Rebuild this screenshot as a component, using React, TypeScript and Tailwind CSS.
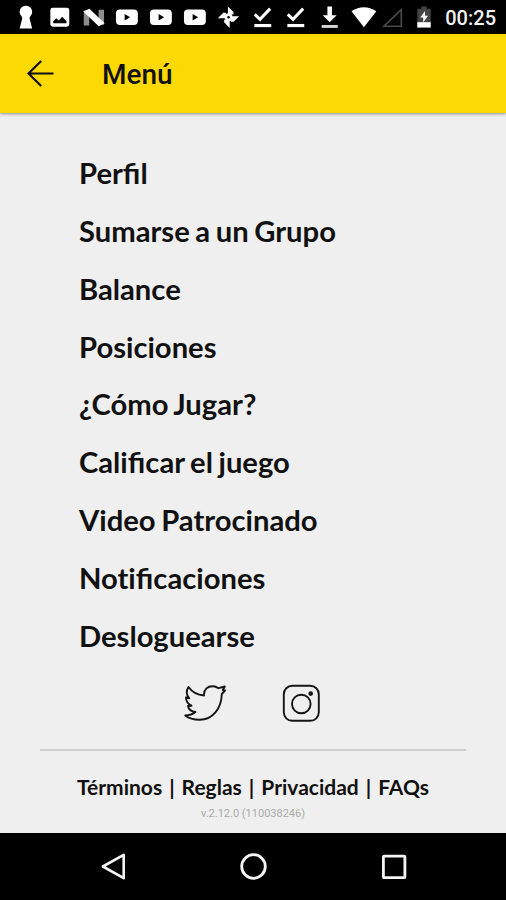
import type { ReactNode } from "react";

const MENU_ITEMS = [
  "Perfil",
  "Sumarse a un Grupo",
  "Balance",
  "Posiciones",
  "¿Cómo Jugar?",
  "Calificar el juego",
  "Video Patrocinado",
  "Notificaciones",
  "Desloguearse",
];

const LEGAL_LINKS = ["Términos", "Reglas", "Privacidad", "FAQs"];

function StatusIcon({ children }: { children: ReactNode }) {
  return (
    <svg viewBox="0 0 34 34" className="h-[34px] w-[33.8px] shrink-0" fill="#fff">
      {children}
    </svg>
  );
}

function YoutubeIcon() {
  return (
    <StatusIcon>
      <rect x="6" y="9.5" width="22" height="15.5" rx="4" />
      <path d="M14.7 14v6.4l5.6-3.2z" fill="#000" />
    </StatusIcon>
  );
}

function CheckIcon() {
  return (
    <StatusIcon>
      <path d="M8.8 14.3l5.3 5L24.3 8.6" fill="none" stroke="#fff" strokeWidth="3" />
      <path d="M8.4 24h17v3.2h-17z" />
    </StatusIcon>
  );
}

function StatusBar() {
  return (
    <div className="flex h-[34px] shrink-0 items-center bg-black pl-[9px]">
      <StatusIcon>
        <path d="M17 5.6a6.2 6.2 0 0 1 4.6 10.4L20.6 18l2.7 10.5H10.7L13.4 18l-1-2A6.2 6.2 0 0 1 17 5.6z" />
      </StatusIcon>
      <StatusIcon>
        <rect x="7.4" y="7.8" width="19" height="19" rx="2.4" />
        <path d="M10.3 23.2v-2l3-3 2.6 2.4 3.4-3.8 4.3 4.4v2z" fill="#000" />
      </StatusIcon>
      <StatusIcon>
        <path d="M6.8 10.5v15h5.5v-15zM21.7 9.8v15h5.5v-15z" fill="#8d8d8d" />
        <path d="M6.3 11.5l6.2-2.8L27.8 23.3l-6 3z" />
      </StatusIcon>
      <YoutubeIcon />
      <YoutubeIcon />
      <YoutubeIcon />
      {/* pinwheel */}
      <StatusIcon>
        <path d="M16 6.4l5.6 5.6v2.6H16zM27.4 16.2l-5.6 5.6h-2.6v-5.6zM17.8 28l-5.6-5.6v-2.6h5.6zM5.8 18.2l5.6-5.6H14v5.6z" />
        <circle cx="16.7" cy="17.2" r="3.9" />
        <circle cx="16.7" cy="17.2" r="1.3" fill="#000" />
      </StatusIcon>
      <CheckIcon />
      <CheckIcon />
      <StatusIcon>
        <path d="M14.5 6.5h4.6v8.7h4.7l-7 7.2-7-7.2h4.7z" />
        <path d="M8.7 25h16.2v3H8.7z" fill="#d5d5d5" />
      </StatusIcon>
      <StatusIcon>
        <path d="M4.5 11.2Q17 3.2 29.5 11.2L17 27.2z" />
      </StatusIcon>
      <svg viewBox="0 0 24 34" className="h-[34px] w-6 shrink-0" fill="none">
        <path d="M3 26.2L20.3 9.6v16.6z" stroke="#4a4a4a" strokeWidth="1.6" />
      </svg>
      <svg viewBox="0 0 16 34" className="ml-[11px] h-[34px] w-4 shrink-0">
        <path d="M1.3 8.7h4V6.5h5.4v2.2h4v18.8H1.3z" fill="#444" />
        <path d="M1.3 22.2h13.4v5.3H1.3z" fill="#fff" />
        <path d="M9 11l-4.8 6.5h3v5l4.8-6.8H9z" fill="#fff" />
      </svg>
      <span className="ml-auto pr-[10px] pt-[2px] font-['Roboto',sans-serif] text-[20px] font-medium leading-none text-[#f2f2f2]">
        00:25
      </span>
    </div>
  );
}

function Header() {
  return (
    <header className="relative flex h-[79px] shrink-0 items-center bg-[#fdd903] pl-[26px] shadow-[0_1px_3px_rgba(0,0,0,0.4)]">
      <button aria-label="Volver">
        <svg viewBox="0 0 28 28" className="size-7" fill="none" stroke="#111" strokeWidth="2.2">
          <path d="M27.5 13.5H2M15.2 1L2.5 13.5 15.2 26" />
        </svg>
      </button>
      <h1 className="ml-12 pt-[3px] font-['Roboto',sans-serif] text-[28px] font-medium leading-none text-[#111]">
        Menú
      </h1>
    </header>
  );
}

// Lato joins "ti" as well as "fi"; only the latter is wanted
function MenuLabel({ text }: { text: string }) {
  const [head, tail] = text.split("ti");
  if (tail === undefined) return <span>{text}</span>;
  return (
    <span>
      <span className="[font-variant-ligatures:none]">{head}ti</span>
      {tail}
    </span>
  );
}

function SocialLinks() {
  return (
    <div className="flex items-center pl-[184px]">
      <svg viewBox="0 0 42 38" className="h-[38px] w-[42px]" fill="none" stroke="#151515" strokeWidth="1.9" strokeLinejoin="round">
        <path d="M4.5 3C8 8 13.5 11 20 11.5C19.5 5 24 2 29 2.2C31.5 2.3 33 3.2 34.5 4.2L40.8 2.5L38.8 6L41 6.5L37.8 10C37.5 24 29 36 15.5 35.8C10 35.7 5 34.5 1.2 31.5C5.5 31.3 8.5 30.5 11.5 28C7 27.5 4.5 25 4 22L7.5 21.7C4 20 2 17 2 13.5L5.3 14.3C2.2 11 2 7 4.5 3Z" />
      </svg>
      <svg viewBox="0 0 38 38" className="ml-[56px] size-[38px]" fill="none" stroke="#151515" strokeWidth="1.9">
        <rect x="1.8" y="1.8" width="35" height="35" rx="8.5" />
        <circle cx="19.3" cy="20" r="9.3" />
        <circle cx="28.7" cy="9.6" r="1.4" fill="#151515" />
      </svg>
    </div>
  );
}

function NavBar() {
  return (
    <nav className="flex h-[67px] shrink-0 items-center justify-between bg-black pl-[100px] pr-[98px]">
      <svg viewBox="0 0 28 28" className="size-7" fill="none" stroke="#f4f4f4" strokeWidth="2.6" strokeLinejoin="round">
        <path d="M2.9 13.5L23.7 1.8v23.4z" />
      </svg>
      <svg viewBox="0 0 28 28" className="size-7" fill="none" stroke="#f4f4f4" strokeWidth="2.8">
        <circle cx="13.5" cy="13.5" r="11.8" />
      </svg>
      <svg viewBox="0 0 28 28" className="size-7" fill="none" stroke="#f4f4f4" strokeWidth="2.8">
        <rect x="3.4" y="3.2" width="21.5" height="21.5" rx="0.8" />
      </svg>
    </nav>
  );
}

export default function App() {
  return (
    <div className="flex h-[900px] w-[506px] flex-col overflow-hidden bg-[#efefef] font-['Lato',sans-serif] text-[#111]">
      <StatusBar />
      <Header />

      <main className="flex flex-1 flex-col pt-[31px]">
        <ul className="flex flex-col pl-[79px]">
          {MENU_ITEMS.map((item) => (
            <li key={item} className="flex h-[57.8px] items-center text-[29.2px] font-bold leading-none [word-spacing:-1.5px]">
              <MenuLabel text={item} />
            </li>
          ))}
        </ul>

        <div className="mt-5">
          <SocialLinks />
        </div>

        <hr className="mx-10 mt-[27px] border-t-2 border-[#cfcfcf]" />

        <div className="mt-6 flex justify-center gap-[7px] text-[21px] font-bold leading-6">
          {LEGAL_LINKS.map((link, i) => (
            <span key={link} className="flex gap-[7px]">
              {i > 0 && <span>|</span>}
              <a>{link}</a>
            </span>
          ))}
        </div>
        <p className="mt-[7px] text-center font-['Roboto',sans-serif] text-[11px] leading-4 text-[#aaa]">
          v.2.12.0 (110038246)
        </p>
      </main>

      <NavBar />
    </div>
  );
}
